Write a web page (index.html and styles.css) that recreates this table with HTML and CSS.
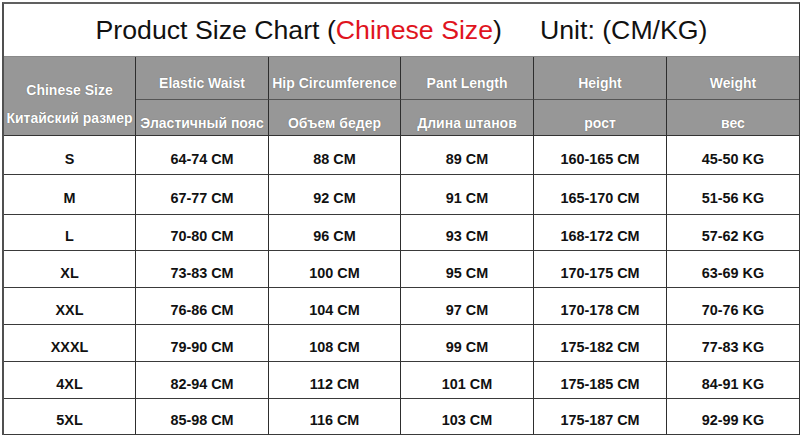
FILE: index.html
```html
<!DOCTYPE html>
<html>
<head>
<meta charset="utf-8">
<link rel="stylesheet" href="styles.css">
</head>
<body>
<div class="chart">
  <div class="title">
    <span>Product Size Chart (<span class="red">Chinese Size</span>)</span>
    <span>Unit: (CM/KG)</span>
  </div>

  <div class="hcell first"><span>Chinese Size</span><span>Китайский размер</span></div>
  <div class="hcell top">Elastic Waist</div>
  <div class="hcell top">Hip Circumference</div>
  <div class="hcell top">Pant Length</div>
  <div class="hcell top">Height</div>
  <div class="hcell top last">Weight</div>
  <div class="hcell sub">Эластичный пояс</div>
  <div class="hcell sub">Объем бедер</div>
  <div class="hcell sub">Длина штанов</div>
  <div class="hcell sub">рост</div>
  <div class="hcell sub last">вес</div>

  <div class="row r1"><div class="cell">S</div><div class="cell">64-74 CM</div><div class="cell">88 CM</div><div class="cell">89 CM</div><div class="cell">160-165 CM</div><div class="cell">45-50 KG</div></div>
  <div class="row r2"><div class="cell">M</div><div class="cell">67-77 CM</div><div class="cell">92 CM</div><div class="cell">91 CM</div><div class="cell">165-170 CM</div><div class="cell">51-56 KG</div></div>
  <div class="row r3"><div class="cell">L</div><div class="cell">70-80 CM</div><div class="cell">96 CM</div><div class="cell">93 CM</div><div class="cell">168-172 CM</div><div class="cell">57-62 KG</div></div>
  <div class="row r4"><div class="cell">XL</div><div class="cell">73-83 CM</div><div class="cell">100 CM</div><div class="cell">95 CM</div><div class="cell">170-175 CM</div><div class="cell">63-69 KG</div></div>
  <div class="row r5"><div class="cell">XXL</div><div class="cell">76-86 CM</div><div class="cell">104 CM</div><div class="cell">97 CM</div><div class="cell">170-178 CM</div><div class="cell">70-76 KG</div></div>
  <div class="row r6"><div class="cell">XXXL</div><div class="cell">79-90 CM</div><div class="cell">108 CM</div><div class="cell">99 CM</div><div class="cell">175-182 CM</div><div class="cell">77-83 KG</div></div>
  <div class="row r7"><div class="cell">4XL</div><div class="cell">82-94 CM</div><div class="cell">112 CM</div><div class="cell">101 CM</div><div class="cell">175-185 CM</div><div class="cell">84-91 KG</div></div>
  <div class="row r8"><div class="cell">5XL</div><div class="cell">85-98 CM</div><div class="cell">116 CM</div><div class="cell">103 CM</div><div class="cell">175-187 CM</div><div class="cell">92-99 KG</div></div>
</div>
</body>
</html>
```

FILE: styles.css
```css
* { box-sizing: border-box; }

html, body {
  margin: 0;
  padding: 0;
  background: #fff;
}

body {
  font-family: "Liberation Sans", Arial, sans-serif;
  color: #111;
  width: 800px;
  height: 438px;
  overflow: hidden;
}

.chart {
  margin: 2px 0 0 2px;
  width: 798px;
  border-left: 2px solid #505050;
  border-top: 2px solid #606060;
  border-right: 1px solid #333;
  display: grid;
  grid-template-columns: 132px 133px 132px 133px 133px 132px;
  grid-template-rows: 53px 43px 36px;
}

.title {
  grid-column: 1 / -1;
  display: flex;
  justify-content: center;
  align-items: center;
  gap: 38px;
  font-size: 26.7px;
  color: #111;
  border-bottom: 1px solid #8a8a8a;
  padding-top: 1px;
}

.red { color: #e0141e; }

.hcell {
  background: #979797;
  color: #fff;
  font-weight: bold;
  font-size: 14px;
  line-height: 20px;
  text-shadow: 0 0 1px #5a5a5a;
  white-space: nowrap;
  display: flex;
  justify-content: center;
  border-right: 1px solid #2e2e2e;
  border-bottom: 1px solid #555;
}

.hcell.last { border-right: none; }

.hcell.top { padding-top: 16px; }

.hcell.sub {
  padding-top: 13px;
  border-bottom-color: #333;
}

.hcell.first {
  grid-row: span 2;
  flex-direction: column;
  align-items: center;
  padding-top: 15px;
  line-height: 28px;
  border-bottom-color: #333;
}

.row {
  grid-column: 1 / -1;
  display: grid;
  grid-template-columns: subgrid;
}

.r1 { height: 39px; }
.r2 { height: 40px; }
.r3 { height: 36px; }
.r4 { height: 37px; }
.r5 { height: 37px; }
.r6 { height: 37px; }
.r7 { height: 37px; }
.r8 { height: 36px; }

.cell {
  display: flex;
  align-items: center;
  justify-content: center;
  font-weight: bold;
  font-size: 14.4px;
  padding-top: 7px;
  border-right: 1px solid #2e2e2e;
  border-bottom: 1px solid #3a3a3a;
}

.cell:last-child { border-right: none; }
```
